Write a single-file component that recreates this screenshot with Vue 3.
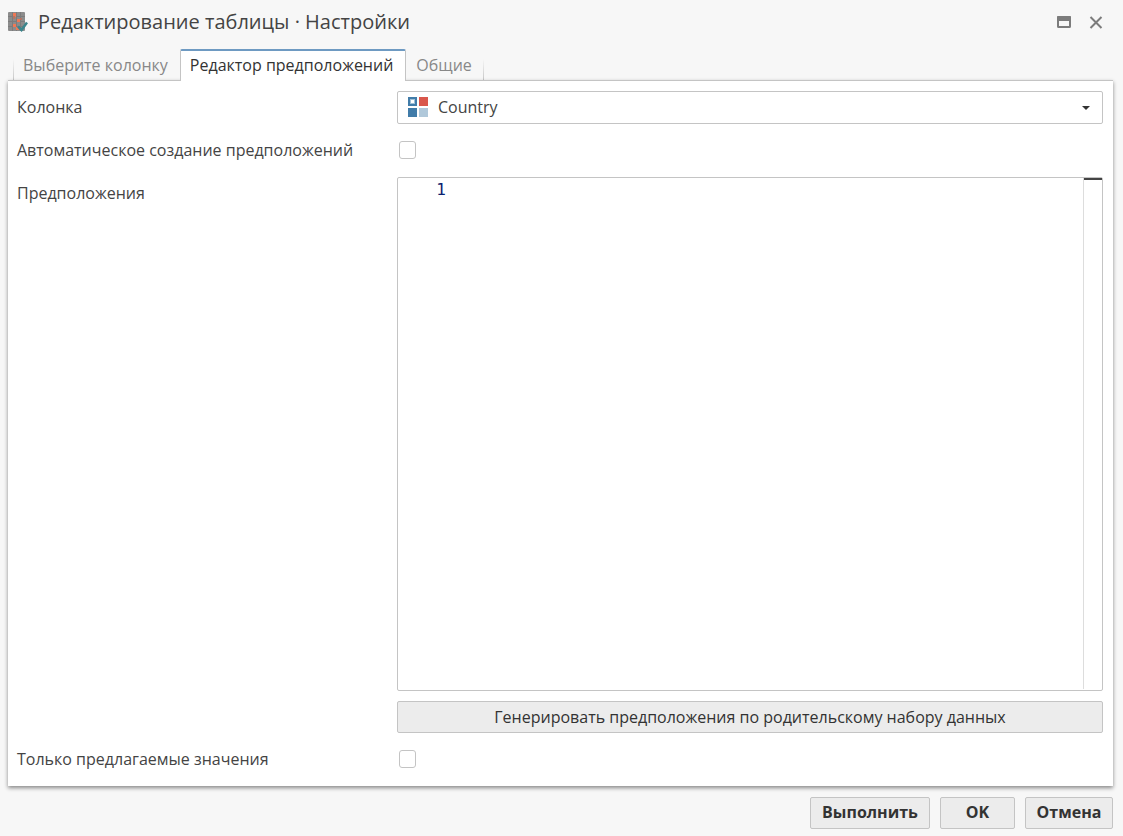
<script setup>
import { ref } from 'vue'

const tabs = ['Выберите колонку', 'Редактор предположений', 'Общие']
const activeTab = ref(1)
const column = ref('Country')
const autoCreate = ref(false)
const onlySuggested = ref(false)
const suggestions = ref('')
</script>

<template>
  <main class="dialog">
    <header class="titlebar">
      <svg class="app-icon" viewBox="0 0 20 20" aria-hidden="true">
        <rect x="0" y="0" width="17" height="19" rx="1" fill="#8c8c8c" />
        <path d="M4.500 0v19M8.500 0v19M12.500 0v19M0 4.500h17M0 9.500h17M0 14.500h17" stroke="#7c7c7c" fill="none" />
        <path d="M5 1h3v4H5zM9 7h3v3H9zM5 12h3v3H5zM8 15h3v3H8z" fill="#ef7855" />
        <path d="M5 4h2v3H5zM12 6h2v2h-2z" fill="#b77462" />
        <path d="M10 14.500l3.500 3.500 5.500-7.500" stroke="#3b858c" stroke-width="2.500" fill="none" />
      </svg>
      <h1>Редактирование таблицы · Настройки</h1>
      <button class="window-button" type="button" aria-label="Развернуть">
        <svg width="16" height="16" viewBox="0 0 16 16">
          <rect x="2" y="3" width="12" height="10" rx="0.500" fill="none" stroke="#7c7c7c" stroke-width="2" />
          <rect x="1" y="2" width="14" height="5" rx="1" fill="#7c7c7c" />
        </svg>
      </button>
      <button class="window-button" type="button" aria-label="Закрыть">
        <svg width="16" height="16" viewBox="0 0 16 16">
          <path d="M2.500 3l11 11M13.500 3l-11 11" stroke="#7c7c7c" stroke-width="2" fill="none" />
        </svg>
      </button>
    </header>

    <nav class="tabs" role="tablist">
      <button
        v-for="(tab, index) in tabs"
        :key="tab"
        type="button"
        role="tab"
        class="tab"
        :class="{ active: index === activeTab }"
        :aria-selected="index === activeTab"
        @click="activeTab = index"
      >{{ tab }}</button>
    </nav>

    <section class="panel">
      <label class="caption" for="column">Колонка</label>
      <div class="select-box">
        <svg class="column-icon" width="20" height="20" viewBox="0 0 20 20" aria-hidden="true">
          <rect x="1" y="1" width="7" height="7" fill="#fff" stroke="#417ca9" stroke-width="2" />
          <rect x="2.500" y="2.500" width="4" height="4" fill="#fff" stroke="#a0c0d6" />
          <rect x="11" y="0" width="9" height="9" fill="#d9574c" />
          <rect x="0" y="11" width="9" height="9" fill="#417ca9" />
          <rect x="11" y="11" width="9" height="9" fill="#b0c8da" />
        </svg>
        <select id="column" v-model="column">
          <option>Country</option>
        </select>
        <svg class="arrow" width="8" height="4" viewBox="0 0 8 4" aria-hidden="true">
          <path d="M0 0h8L4 4z" fill="#333" />
        </svg>
      </div>

      <label class="caption" for="auto">Автоматическое создание предположений</label>
      <div class="check-cell"><input id="auto" v-model="autoCreate" type="checkbox"></div>

      <label class="caption" for="suggestions">Предположения</label>
      <div class="editor-cell">
        <div class="editor">
          <span class="line-number">1</span>
          <textarea id="suggestions" v-model="suggestions" spellcheck="false"></textarea>
          <div class="ruler"></div>
        </div>
        <button class="button generate" type="button">Генерировать предположения по родительскому набору данных</button>
      </div>

      <label class="caption" for="only">Только предлагаемые значения</label>
      <div class="check-cell"><input id="only" v-model="onlySuggested" type="checkbox"></div>
    </section>

    <footer class="actions">
      <button class="button" type="button">Выполнить</button>
      <button class="button ok" type="button">OK</button>
      <button class="button" type="button">Отмена</button>
    </footer>
  </main>
</template>

<style>
body {
  margin: 0;
  background: #f7f7f7;
}
</style>

<style scoped>
.dialog,
.dialog * {
  box-sizing: border-box;
}
.dialog {
  display: flex;
  flex-direction: column;
  min-height: 100vh;
  padding: 0 10px 7px 8px;
  background: #f7f7f7;
  color: #444;
  font: 16px/24px "Open Sans", "Noto Sans", sans-serif;
}
button,
select,
textarea {
  font: inherit;
  color: inherit;
}
.titlebar {
  display: flex;
  align-items: center;
  height: 44px;
  padding-right: 9px;
}
.app-icon {
  width: 20px;
  height: 20px;
  margin-right: 10px;
}
h1 {
  flex: 1;
  margin: 0;
  font-size: 20px;
  line-height: 28px;
  font-weight: 400;
}
.window-button {
  display: flex;
  margin-left: 16px;
  padding: 0;
  border: 0;
  background: none;
}
.tabs {
  display: flex;
  align-items: flex-end;
  height: 37px;
  padding-left: 5px;
}
.tab {
  height: 32px;
  padding: 0 12px 0 10px;
  border: 0;
  background: none;
  color: #888;
}
.tab:first-child {
  background: linear-gradient(transparent 10px, #c4c4c4) left / 1px 100% no-repeat;
}
.tab:last-child {
  background: linear-gradient(transparent 10px, #c4c4c4) right / 1px 100% no-repeat;
}
.tab.active {
  position: relative;
  padding: 0 12px 2px 9px;
  border: 1px solid #c4c4c4;
  border-top: 2px solid #6e9ac2;
  border-bottom: 0;
  border-radius: 2px 2px 0 0;
  background: #fff;
  color: #333;
}
.panel {
  flex: 1;
  display: grid;
  grid-template-columns: 380px minmax(0, 1fr);
  grid-template-rows: auto auto 1fr auto;
  row-gap: 10px;
  margin-top: -1px;
  padding: 10px 10px 10px 9px;
  border-top: 1px solid #c4c4c4;
  background: #fff;
  box-shadow: 0 2px 4px rgba(0, 0, 0, 0.45);
}
.caption {
  padding-top: 4px;
}
.select-box {
  position: relative;
  height: 33px;
}
.select-box select {
  width: 100%;
  height: 100%;
  padding: 0 32px 2px 40px;
  border: 1px solid #c4c4c4;
  border-radius: 2px;
  appearance: none;
  background: #fff;
}
.column-icon {
  position: absolute;
  top: 6px;
  left: 11px;
}
.arrow {
  position: absolute;
  top: 15px;
  right: 13px;
}
.check-cell {
  display: flex;
  align-items: center;
  height: 33px;
  padding: 0 0 2px 2px;
}
.check-cell input {
  width: 17px;
  height: 18px;
  margin: 0;
  border: 1px solid #c4c4c4;
  border-radius: 3px;
  appearance: none;
  background: #fff;
}
.check-cell input:checked {
  background: #6e9ac2;
}
.editor-cell {
  display: flex;
  flex-direction: column;
  gap: 10px;
}
.editor {
  flex: 1;
  display: flex;
  border: 1px solid #c4c4c4;
  border-radius: 2px;
  background: #fff;
  font: 16px/24px "DejaVu Sans Mono", monospace;
}
.line-number {
  width: 48px;
  text-align: right;
  color: #0b216f;
}
textarea {
  flex: 1;
  min-width: 0;
  margin-left: 24px;
  padding: 0;
  border: 0;
  outline: 0;
  resize: none;
  background: none;
}
.ruler {
  width: 19px;
  margin-bottom: 1px;
  border-left: 1px solid #ddd;
  background: linear-gradient(#444, #444) top / 100% 2px no-repeat;
}
.button {
  height: 32px;
  padding: 0 10px 2px;
  border: 1px solid #c4c4c4;
  border-radius: 2px;
  background: #ececec;
  color: #333;
  font-weight: 700;
}
.generate {
  padding-bottom: 0;
  font-weight: 400;
}
.actions {
  display: flex;
  justify-content: flex-end;
  gap: 10px;
  padding-top: 11px;
}
.actions .button {
  min-width: 88px;
}
.actions .button:first-child {
  min-width: 120px;
}
.actions .ok {
  min-width: 75px;
}
</style>
